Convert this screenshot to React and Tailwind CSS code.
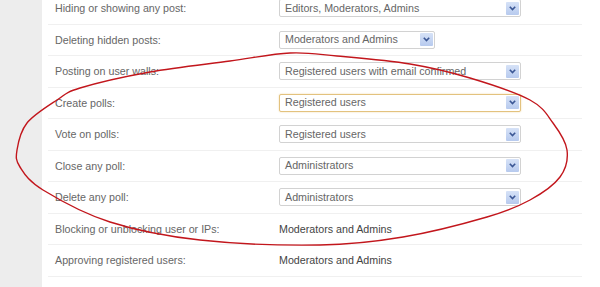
import React from 'react'

const rows = [
  { label: 'Hiding or showing any post:', value: 'Editors, Moderators, Admins', type: 'select' },
  { label: 'Deleting hidden posts:', value: 'Moderators and Admins', type: 'select', small: true },
  { label: 'Posting on user walls:', value: 'Registered users with email confirmed', type: 'select' },
  { label: 'Create polls:', value: 'Registered users', type: 'select', focus: true },
  { label: 'Vote on polls:', value: 'Registered users', type: 'select' },
  { label: 'Close any poll:', value: 'Administrators', type: 'select' },
  { label: 'Delete any poll:', value: 'Administrators', type: 'select' },
  { label: 'Blocking or unblocking user or IPs:', value: 'Moderators and Admins', type: 'text' },
  { label: 'Approving registered users:', value: 'Moderators and Admins', type: 'text' },
]

// hand-drawn loop, points read off the picture
const pts = [
  [290, 53], [337, 56], [410, 64], [470, 78], [530, 100], [553, 123], [567, 150],
  [560, 177], [530, 200], [487, 217], [403, 237], [320, 245], [200, 240], [110, 222],
  [43, 190], [20, 167], [17, 150], [27, 123], [57, 100], [80, 88], [150, 72], [230, 61],
]

const loopPath = () => {
  const n = pts.length
  let d = `M ${pts[0][0]} ${pts[0][1]}`
  for (let i = 0; i < n; i++) {
    const p0 = pts[(i - 1 + n) % n]
    const p1 = pts[i]
    const p2 = pts[(i + 1) % n]
    const p3 = pts[(i + 2) % n]
    const c1 = [p1[0] + (p2[0] - p0[0]) / 6, p1[1] + (p2[1] - p0[1]) / 6]
    const c2 = [p2[0] - (p3[0] - p1[0]) / 6, p2[1] - (p3[1] - p1[1]) / 6]
    d += ` C ${c1[0]} ${c1[1]} ${c2[0]} ${c2[1]} ${p2[0]} ${p2[1]}`
  }
  return d
}

const Select = ({ value, small, focus }) => (
  <div
    className={`flex h-[18px] items-center justify-between rounded-[2px] border bg-white pl-[5px] pr-[1px] ${
      small ? 'w-[156px]' : 'w-[242px]'
    } ${focus ? 'border-[#e3c27e] shadow-[0_0_2px_#f0d9a8]' : 'border-[#d2d2d2]'}`}
  >
    <span className="text-[10.7px] leading-none text-[#666]">{value}</span>
    <span className="flex h-[13px] w-[13px] items-center justify-center rounded-[1px] bg-gradient-to-b from-[#d6e2f7] to-[#b7caee]">
      <svg width="7" height="5" viewBox="0 0 7 5">
        <path d="M0.8 0.8 L3.5 3.6 L6.2 0.8" fill="none" stroke="#3b5795" strokeWidth="1.6" />
      </svg>
    </span>
  </div>
)

export default function App() {
  return (
    <div
      className="relative flex h-[287px] w-[600px] overflow-hidden bg-white"
      style={{ fontFamily: '"Liberation Sans", Arial, sans-serif' }}
    >
      <div className="w-[42px] shrink-0 bg-[#ededed]" />
      <div className="flex-1 pl-[6px]">
        <div className="-mt-[7px] w-[534px]">
          {rows.map((r) => (
            <div key={r.label} className="flex h-[31.5px] items-center border-b border-[#f0f0f0]">
              <div className="w-[231px] pl-[7px] text-[10.7px] text-[#666]">{r.label}</div>
              {r.type === 'select' ? (
                <Select value={r.value} small={r.small} focus={r.focus} />
              ) : (
                <span className="text-[10.7px] text-[#444]">{r.value}</span>
              )}
            </div>
          ))}
        </div>
      </div>
      <svg className="pointer-events-none absolute inset-0" width="600" height="287">
        <path d={loopPath()} fill="none" stroke="#c2161c" strokeWidth="1.4" />
      </svg>
    </div>
  )
}
